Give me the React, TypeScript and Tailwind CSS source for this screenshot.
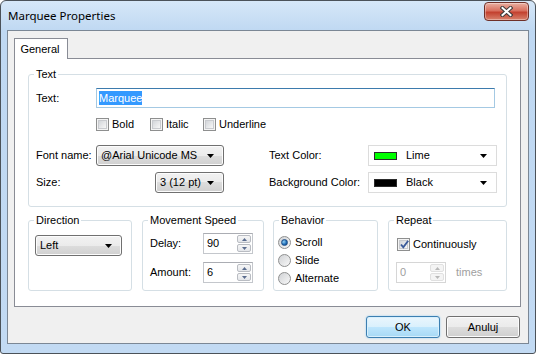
import React from "react";

const ui = "font-['Liberation_Sans',Arial,sans-serif] text-[11px] text-black";

function Arrow() {
  return (
    <svg width="7" height="4" viewBox="0 0 7 4">
      <path d="M0 0h7L3.5 4z" fill="#000" />
    </svg>
  );
}

function Combo({ label, w }: { label: string; w: string }) {
  return (
    <div
      className={`flex h-[21px] items-center justify-between rounded-[3px] border border-[#707070] bg-[linear-gradient(#f2f2f2,#ebebeb_50%,#dddddd_50%,#d0d0d0)] pl-[4px] pr-[9px] shadow-[inset_0_0_0_1px_#fcfcfc] ${w}`}
    >
      <span>{label}</span>
      <Arrow />
    </div>
  );
}

function ColorCombo({ label, color }: { label: string; color: string }) {
  return (
    <div className="flex h-[21px] w-[129px] items-center border border-[#dcdcdc] bg-white pl-[5px] pr-[9px]">
      <span
        className="h-[8px] w-[23px] border border-[#2b2b2b]"
        style={{ background: color }}
      />
      <span className="ml-[9px] flex-1">{label}</span>
      <Arrow />
    </div>
  );
}

function Check({ checked, label }: { checked?: boolean; label: string }) {
  return (
    <div className="flex items-center gap-[3px]">
      <span className="relative flex h-[13px] w-[13px] items-center justify-center border border-[#8e8f8f] bg-[#f4f4f4]">
        <span className="h-[9px] w-[9px] border border-[#c9cbcf] bg-[linear-gradient(135deg,#d3d6da,#f7f7f7)]" />
        {checked && (
          <svg
            className="absolute left-[1px] top-[0px]"
            width="11"
            height="11"
            viewBox="0 0 11 11"
          >
            <path
              d="M2 5.5L4.3 8.3L9.2 1.8"
              fill="none"
              stroke="#3b5b9a"
              strokeWidth="1.9"
            />
          </svg>
        )}
      </span>
      <span>{label}</span>
    </div>
  );
}

function Radio({ checked, label }: { checked?: boolean; label: string }) {
  return (
    <div className="flex h-[18px] items-center gap-[4px]">
      <span className="flex h-[13px] w-[13px] items-center justify-center rounded-full border border-[#8e8f8f] bg-[linear-gradient(135deg,#d0d2d5,#f8f8f8)]">
        {checked && (
          <span className="h-[7px] w-[7px] rounded-full border border-[#1f4e86] bg-[radial-gradient(circle_at_35%_35%,#8fd0f5,#1c69b4_60%,#0d3f7a)]" />
        )}
      </span>
      <span>{label}</span>
    </div>
  );
}

function Spin({ value, disabled }: { value: string; disabled?: boolean }) {
  const arrow = disabled ? "#b8b8b8" : "#5a6c8e";
  return (
    <div
      className={`flex h-[21px] w-[50px] items-stretch border bg-white ${
        disabled ? "border-[#d6d6d6] text-[#a0a0a0]" : "border-[#c4c7cc] border-t-[#abadb3]"
      }`}
    >
      <span className="flex flex-1 items-center pl-[3px]">{value}</span>
      <div className="flex w-[15px] flex-col gap-px py-px pr-px">
        <span
          className={`flex flex-1 items-center justify-center rounded-[2px] border ${
            disabled ? "border-[#e0e0e0] bg-[#f4f4f4]" : "border-[#b9bcc2] bg-[linear-gradient(#f6f6f6,#e4e6ea)]"
          }`}
        >
          <svg width="5" height="3" viewBox="0 0 5 3">
            <path d="M0 3h5L2.5 0z" fill={arrow} />
          </svg>
        </span>
        <span
          className={`flex flex-1 items-center justify-center rounded-[2px] border ${
            disabled ? "border-[#e0e0e0] bg-[#f4f4f4]" : "border-[#b9bcc2] bg-[linear-gradient(#f6f6f6,#e4e6ea)]"
          }`}
        >
          <svg width="5" height="3" viewBox="0 0 5 3">
            <path d="M0 0h5L2.5 3z" fill={arrow} />
          </svg>
        </span>
      </div>
    </div>
  );
}

function Group({
  title,
  className,
  children,
}: {
  title: string;
  className: string;
  children: React.ReactNode;
}) {
  return (
    <div className={`relative rounded-[3px] border border-[#d5dfe5] ${className}`}>
      <span className="absolute -top-[8px] left-[5px] bg-white px-[2px] leading-[14px]">
        {title}
      </span>
      {children}
    </div>
  );
}

export default function App() {
  return (
    <div className={`h-[354px] w-[536px] bg-white ${ui}`}>
      <div className="flex h-full w-full flex-col rounded-t-[6px] rounded-b-[3px] border border-[#4b5259] bg-[linear-gradient(#d6e7f8,#bfd8f2_30px,#c2daf3)]">
        {/* title bar */}
        <div className="flex h-[29px] shrink-0 items-start justify-between">
          <span className="mt-[6px] pl-[7px] font-['Noto_Sans','Open_Sans',sans-serif] text-[11.5px] leading-[17px] text-black">
            Marquee Properties
          </span>
          <div className="mr-[6px] mt-[1px] flex h-[19px] w-[45px] items-center justify-center rounded-[4px] border border-[#6e3029] bg-[linear-gradient(#eab0a2,#d8705f_45%,#c3412f_55%,#d8826d)] shadow-[inset_0_0_0_1px_rgba(255,255,255,0.35)]">
            <svg width="13" height="11" viewBox="0 0 13 11">
              <path
                d="M2.5 2L10.5 9M10.5 2L2.5 9"
                stroke="#3a3a3a"
                strokeWidth="4"
                strokeLinecap="square"
              />
              <path
                d="M2.5 2L10.5 9M10.5 2L2.5 9"
                stroke="#ffffff"
                strokeWidth="2"
                strokeLinecap="square"
              />
            </svg>
          </div>
        </div>

        {/* client area */}
        <div className="mx-[6px] mb-[9px] flex flex-1 flex-col border border-[#7b8795] bg-[#f0f0f0] pl-[6px] pr-[7px] pt-[7px]">
          <div className="flex">
            <div className="relative z-10 -mb-px flex h-[21px] w-[54px] items-center justify-center border border-b-0 border-[#898c95] bg-white pr-[2px]">
              General
            </div>
          </div>
          <div className="flex h-[249px] flex-col border border-[#898c95] bg-white px-[13px] pt-[15px]">
            <Group title="Text" className="flex h-[133px] flex-col pl-[7px]">
              <div className="mt-[13px] flex h-[20px] items-center">
                <span className="w-[60px]">Text:</span>
                <div className="flex h-[20px] w-[399px] items-center border border-[#a4c9e3] border-t-[#3d7bad] bg-white pl-[2px]">
                  <span className="bg-[#3399ff] leading-[14px] text-white">Marquee</span>
                </div>
              </div>
              <div className="ml-[60px] mt-[10px] flex h-[13px] items-center">
                <div className="w-[54px]">
                  <Check label="Bold" />
                </div>
                <div className="w-[53px]">
                  <Check label="Italic" />
                </div>
                <Check label="Underline" />
              </div>
              <div className="mt-[14px] flex h-[21px] items-center">
                <span className="w-[60px]">Font name:</span>
                <Combo label="@Arial Unicode MS" w="w-[128px]" />
                <span className="ml-[45px] w-[99px]">Text Color:</span>
                <ColorCombo label="Lime" color="#00ff00" />
              </div>
              <div className="mt-[6px] flex h-[21px] items-center">
                <span className="w-[119px]">Size:</span>
                <Combo label="3 (12 pt)" w="w-[69px]" />
                <span className="ml-[45px] w-[99px]">Background Color:</span>
                <ColorCombo label="Black" color="#000000" />
              </div>
            </Group>

            <div className="mt-[13px] flex h-[71px] gap-[10px]">
              <Group title="Direction" className="w-[104px] pl-[6px] pt-[14px]">
                <Combo label="Left" w="w-[87px]" />
              </Group>
              <Group title="Movement Speed" className="w-[122px] pl-[7px] pt-[12px]">
                <div className="flex items-center">
                  <span className="w-[53px]">Delay:</span>
                  <Spin value="90" />
                </div>
                <div className="mt-[8px] flex items-center">
                  <span className="w-[53px]">Amount:</span>
                  <Spin value="6" />
                </div>
              </Group>
              <Group title="Behavior" className="-ml-px w-[105px] pl-[4px] pt-[12px]">
                <Radio checked label="Scroll" />
                <Radio label="Slide" />
                <Radio label="Alternate" />
              </Group>
              <Group title="Repeat" className="w-[119px] pl-[7px] pt-[15px]">
                <div className="flex h-[16px] items-center pl-px">
                  <Check checked label="Continuously" />
                </div>
                <div className="mt-[10px] flex items-center">
                  <Spin value="0" disabled />
                  <span className="ml-[10px] text-[#a0a0a0]">times</span>
                </div>
              </Group>
            </div>
          </div>

          <div className="mt-[9px] flex justify-end gap-[6px] pr-px">
            <div className="flex h-[22px] w-[74px] items-center justify-center rounded-[3px] border border-[#3c7fb1] bg-[linear-gradient(#eaf6fd,#d9f0fc_50%,#bee6fd_50%,#a7d9f5)] shadow-[inset_0_0_0_1px_#d8f0fd,0_0_2px_#8ecbf1]">
              OK
            </div>
            <div className="flex h-[22px] w-[74px] items-center justify-center rounded-[3px] border border-[#707070] bg-[linear-gradient(#f2f2f2,#ebebeb_50%,#dddddd_50%,#cfcfcf)] shadow-[inset_0_0_0_1px_#fcfcfc]">
              Anuluj
            </div>
          </div>
        </div>
      </div>
    </div>
  );
}
